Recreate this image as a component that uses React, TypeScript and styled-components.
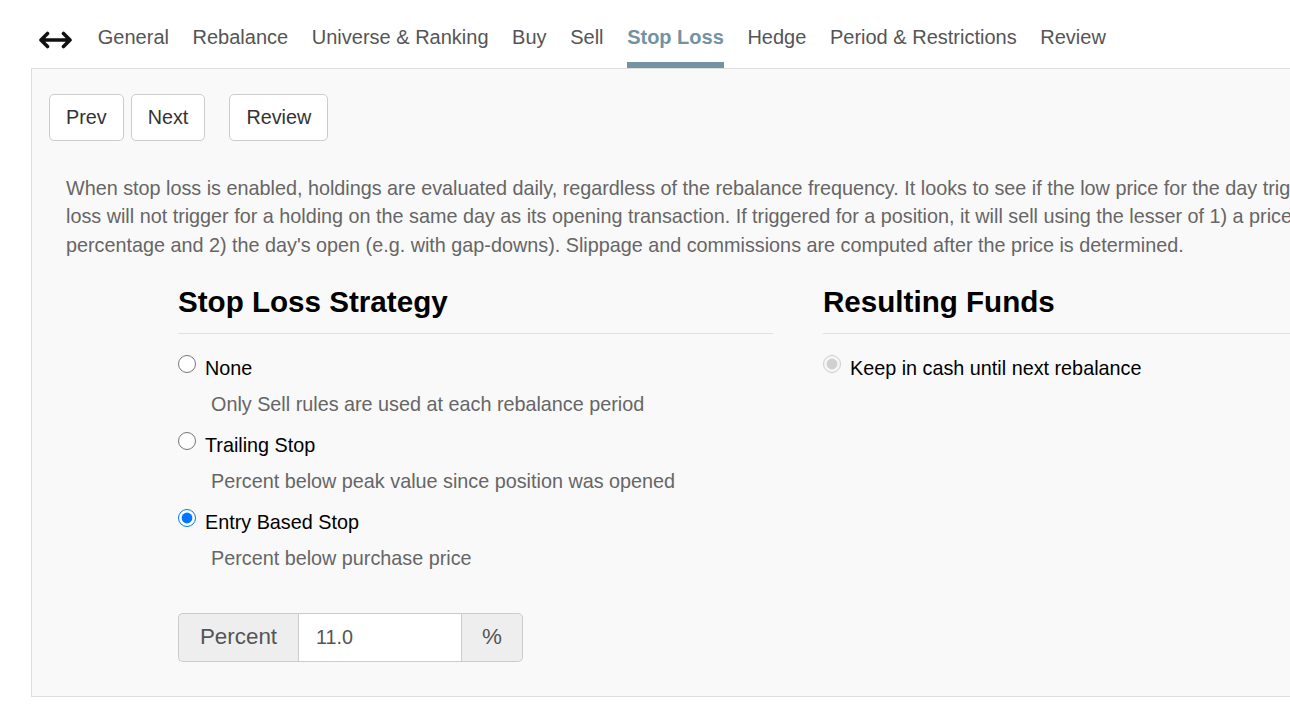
import React from "react";
import styled, { createGlobalStyle } from "styled-components";

const GlobalStyle = createGlobalStyle`
  html, body {
    margin: 0;
    padding: 0;
    background: #ffffff;
    overflow: hidden;
  }
  body {
    font-family: "Liberation Sans", Arial, sans-serif;
    font-size: 19.8px;
    line-height: 1.42857;
    color: #333;
  }
  * { box-sizing: border-box; }
`;

const Page = styled.div`
  width: 1500px;
`;

const Nav = styled.nav`
  display: flex;
  align-items: stretch;
  height: 68px;
  padding-left: 38px;
`;

const ToggleIcon = styled.div`
  display: flex;
  align-items: center;
  padding-top: 12px;
  margin-right: 13px;
  width: 35px;
`;

const Tab = styled.div<{ $active?: boolean }>`
  display: flex;
  align-items: center;
  height: 68px;
  padding-top: 12px;
  margin: 0 11.8px;
  font-size: 20px;
  line-height: 28px;
  color: ${(p) => (p.$active ? "#7393a2" : "#555")};
  font-weight: ${(p) => (p.$active ? 700 : 400)};
  border-bottom: 6px solid ${(p) => (p.$active ? "#7393a2" : "transparent")};
  white-space: nowrap;
`;

const Panel = styled.section`
  margin-left: 31px;
  border: 1px solid #ddd;
  border-right: none;
  background: #f9f9f9;
  padding: 25px 0 33px 17px;
  height: 629px;
`;

const ButtonRow = styled.div`
  display: flex;
  gap: 7px;
`;

const Button = styled.button<{ $spaced?: boolean }>`
  font-family: inherit;
  font-size: 19.8px;
  line-height: 28px;
  padding: 8.4px 16px;
  border: 1px solid #ccc;
  border-radius: 5px;
  background: #fff;
  color: #333;
  margin-left: ${(p) => (p.$spaced ? "17px" : "0")};
`;

const Intro = styled.p`
  margin: 33px 0 21px 17px;
  color: #666;
  font-size: 19.8px;
  line-height: 28.6px;
`;

const Line = styled.span`
  display: block;
  white-space: nowrap;
`;

const Columns = styled.div`
  display: grid;
  grid-template-columns: 595px 595px;
  column-gap: 50px;
  margin-left: 129px;
`;

const Fieldset = styled.div`
  display: flex;
  flex-direction: column;
`;

const Legend = styled.h3`
  margin: 0 0 20px;
  font-size: 29.6px;
  line-height: 42px;
  font-weight: 700;
  color: #000;
  padding-bottom: 10px;
  border-bottom: 1px solid #e1e1e1;
`;

const Option = styled.div`
  margin-bottom: 13px;
`;

const RadioRow = styled.label`
  display: flex;
  align-items: flex-start;
  gap: 9px;
  color: #000;
  font-size: 19.8px;
  line-height: 28px;
`;

const Radio = styled.input`
  width: 18px;
  height: 18px;
  margin: 1px 0 0 0;
  flex: none;
  accent-color: #0075ff;
`;

const Description = styled.div`
  margin: 8px 0 0 33px;
  color: #666;
  font-size: 19.8px;
  line-height: 28px;
`;

const InputGroup = styled.div`
  display: flex;
  width: 345px;
  height: 49px;
  margin-top: 28px;
`;

const Addon = styled.span<{ $side: "left" | "right" }>`
  display: flex;
  align-items: center;
  justify-content: center;
  padding: 0 20px;
  background: #eee;
  border: 1px solid #ccc;
  color: #555;
  font-size: 22.4px;
  border-radius: ${(p) => (p.$side === "left" ? "5px 0 0 5px" : "0 5px 5px 0")};
  ${(p) => (p.$side === "left" ? "border-right: none; width: 120px;" : "border-left: none; width: 61px;")}
`;

const NumberInput = styled.input`
  flex: 1;
  min-width: 0;
  border: 1px solid #ccc;
  background: #fff;
  padding: 0 17px;
  font-family: inherit;
  font-size: 19.8px;
  color: #555;
  outline: none;
`;

const ArrowIcon = () => (
  <svg width="35" height="18" viewBox="0 0 35 18" fill="none">
    <path
      d="M3 9 H32 M9.5 2.5 L3 9 L9.5 15.5 M25.5 2.5 L32 9 L25.5 15.5"
      stroke="#111"
      strokeWidth="3.6"
      strokeLinecap="round"
      strokeLinejoin="round"
    />
  </svg>
);

const tabs = [
  "General",
  "Rebalance",
  "Universe & Ranking",
  "Buy",
  "Sell",
  "Stop Loss",
  "Hedge",
  "Period & Restrictions",
  "Review",
];

const options = [
  { label: "None", desc: "Only Sell rules are used at each rebalance period", checked: false },
  { label: "Trailing Stop", desc: "Percent below peak value since position was opened", checked: false },
  { label: "Entry Based Stop", desc: "Percent below purchase price", checked: true },
];

export default function App() {
  return (
    <Page>
      <GlobalStyle />
      <Nav>
        <ToggleIcon>
          <ArrowIcon />
        </ToggleIcon>
        {tabs.map((t) => (
          <Tab key={t} $active={t === "Stop Loss"}>
            {t}
          </Tab>
        ))}
      </Nav>
      <Panel>
        <ButtonRow>
          <Button>Prev</Button>
          <Button>Next</Button>
          <Button $spaced>Review</Button>
        </ButtonRow>
        <Intro>
          <Line>
            When stop loss is enabled, holdings are evaluated daily, regardless of the rebalance frequency. It looks to see if the low price for the day triggers the stop. The stop
          </Line>
          <Line>
            loss will not trigger for a holding on the same day as its opening transaction. If triggered for a position, it will sell using the lesser of 1) a price based on the stop loss
          </Line>
          <Line>
            percentage and 2) the day's open (e.g. with gap-downs). Slippage and commissions are computed after the price is determined.
          </Line>
        </Intro>
        <Columns>
          <Fieldset>
            <Legend>Stop Loss Strategy</Legend>
            {options.map((o) => (
              <Option key={o.label}>
                <RadioRow>
                  <Radio type="radio" name="strategy" defaultChecked={o.checked} />
                  {o.label}
                </RadioRow>
                <Description>{o.desc}</Description>
              </Option>
            ))}
            <InputGroup>
              <Addon $side="left">Percent</Addon>
              <NumberInput type="text" defaultValue="11.0" />
              <Addon $side="right">%</Addon>
            </InputGroup>
          </Fieldset>
          <Fieldset>
            <Legend>Resulting Funds</Legend>
            <Option>
              <RadioRow>
                <Radio type="radio" name="funds" defaultChecked disabled />
                Keep in cash until next rebalance
              </RadioRow>
            </Option>
          </Fieldset>
        </Columns>
      </Panel>
    </Page>
  );
}
